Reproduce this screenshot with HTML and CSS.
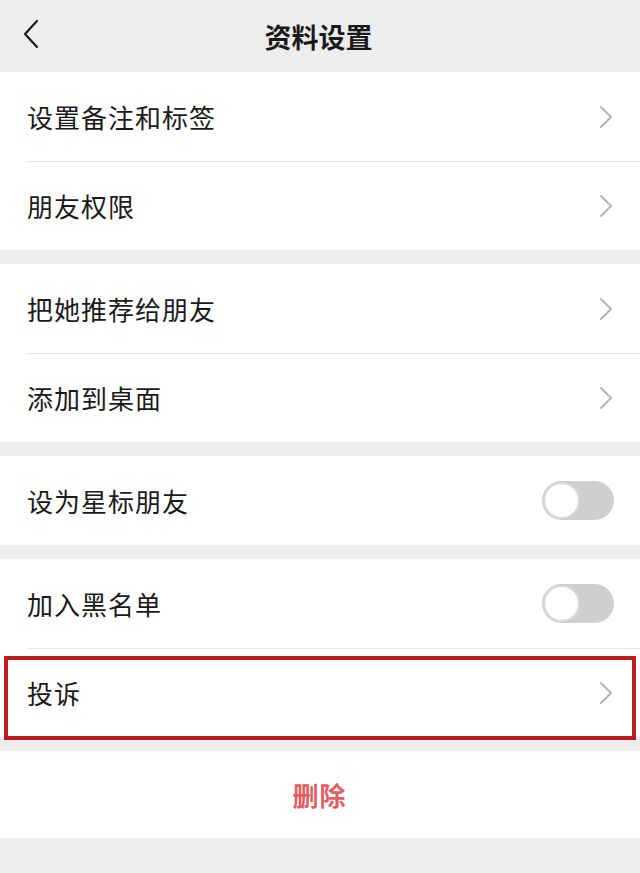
FILE: index.html
```html
<!DOCTYPE html>
<html lang="zh-CN">
<head>
<meta charset="utf-8">
<title>资料设置</title>
<link rel="stylesheet" href="styles.css">
</head>
<body>
<div class="page">
  <header class="topbar">
    <svg class="back" width="16" height="30" viewBox="0 0 16 30"><path d="M14 2 L2 15 L14 28" fill="none" stroke="#1a1a1a" stroke-width="2.2" stroke-linecap="round" stroke-linejoin="round"/></svg>
    <h1 class="title">资料设置</h1>
  </header>

  <section class="group">
    <div class="row"><span class="label">设置备注和标签</span><svg class="chev" width="14" height="24" viewBox="0 0 14 24"><path d="M2 2 L12 12 L2 22" fill="none" stroke="#b4b4b4" stroke-width="2" stroke-linecap="round" stroke-linejoin="round"/></svg></div>
    <div class="row"><span class="label">朋友权限</span><svg class="chev" width="14" height="24" viewBox="0 0 14 24"><path d="M2 2 L12 12 L2 22" fill="none" stroke="#b4b4b4" stroke-width="2" stroke-linecap="round" stroke-linejoin="round"/></svg></div>
  </section>

  <section class="group">
    <div class="row"><span class="label">把她推荐给朋友</span><svg class="chev" width="14" height="24" viewBox="0 0 14 24"><path d="M2 2 L12 12 L2 22" fill="none" stroke="#b4b4b4" stroke-width="2" stroke-linecap="round" stroke-linejoin="round"/></svg></div>
    <div class="row"><span class="label">添加到桌面</span><svg class="chev" width="14" height="24" viewBox="0 0 14 24"><path d="M2 2 L12 12 L2 22" fill="none" stroke="#b4b4b4" stroke-width="2" stroke-linecap="round" stroke-linejoin="round"/></svg></div>
  </section>

  <section class="group">
    <div class="row"><span class="label">设为星标朋友</span><span class="switch"><span class="knob"></span></span></div>
  </section>

  <section class="group">
    <div class="row"><span class="label">加入黑名单</span><span class="switch"><span class="knob"></span></span></div>
    <div class="row highlighted"><span class="label">投诉</span><svg class="chev" width="14" height="24" viewBox="0 0 14 24"><path d="M2 2 L12 12 L2 22" fill="none" stroke="#b4b4b4" stroke-width="2" stroke-linecap="round" stroke-linejoin="round"/></svg><span class="mark"></span></div>
  </section>

  <section class="group">
    <div class="row danger"><span class="del">删除</span></div>
  </section>
</div>
</body>
</html>
```

FILE: styles.css
```css
* { box-sizing: border-box; }
html, body {
  margin: 0;
  padding: 0;
  background: #ededed;
}
body {
  font-family: "Noto Sans CJK SC", "Noto Sans", sans-serif;
  color: #1a1a1a;
}
.page {
  width: 640px;
  min-height: 873px;
  background: #ededed;
}
.topbar {
  height: 72px;
  position: relative;
  display: flex;
  align-items: center;
  justify-content: center;
  background: #ededed;
}
.back {
  position: absolute;
  left: 23px;
  top: 19px;
}
.title {
  margin: 0 0 0 -3px;
  font-size: 27px;
  font-weight: 700;
  letter-spacing: 0;
  color: #1a1a1a;
}
.group {
  background: #fff;
  margin-bottom: 14px;
}
.row {
  height: 89px;
  display: flex;
  align-items: center;
  justify-content: space-between;
  padding: 0 28px 0 27px;
  position: relative;
}
.row + .row::before {
  content: "";
  position: absolute;
  top: 0;
  left: 27px;
  right: 0;
  height: 1px;
  background: #e6e6e6;
}
.label {
  font-size: 26px;
  letter-spacing: 1px;
  color: #1a1a1a;
}
.chev {
  margin-right: -1px;
}
.switch {
  width: 72px;
  height: 39px;
  border-radius: 20px;
  background: #cfcfcf;
  position: relative;
  margin-right: -2px;
}
.knob {
  position: absolute;
  left: 1px;
  top: 1px;
  width: 37px;
  height: 37px;
  border-radius: 50%;
  background: #fff;
  border: 2px solid #d8d8d8;
}
.mark {
  position: absolute;
  left: 4px;
  right: 4px;
  top: 8px;
  bottom: -3px;
  border: 4px solid #bb1b1b;
  pointer-events: none;
}
.danger {
  justify-content: center;
  height: 87px;
}
.del {
  font-size: 26px;
  font-weight: 700;
  color: #e05d62;
  letter-spacing: 1px;
}
```
